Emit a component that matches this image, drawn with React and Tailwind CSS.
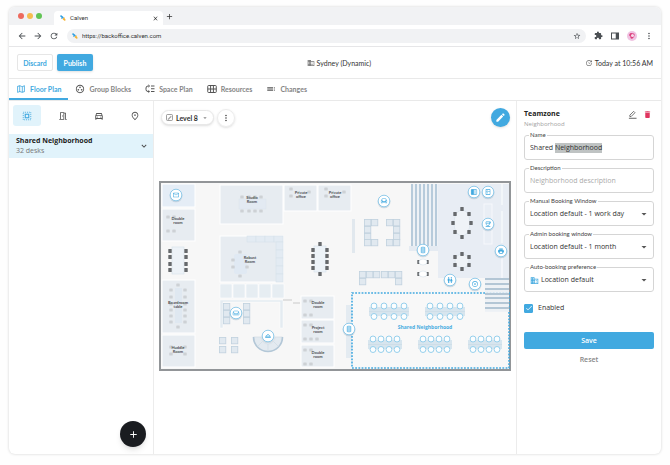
import React, { useEffect, useRef, useState } from "react";
import {
  MdAdd,
  MdAdjust,
  MdArrowBack,
  MdArrowDropDown,
  MdArrowForward,
  MdBusiness,
  MdCheck,
  MdClose,
  MdDelete,
  MdEdit,
  MdExtension,
  MdKeyboardArrowDown,
  MdMoreVert,
  MdOutlineChair,
  MdOutlineCoffee,
  MdOutlineDirectionsCar,
  MdOutlineGroupWork,
  MdOutlineKitchen,
  MdOutlineMailOutline,
  MdOutlineMap,
  MdOutlineMeetingRoom,
  MdOutlinePlace,
  MdOutlineRoomService,
  MdOutlineWeekend,
  MdPrint,
  MdRefresh,
  MdStarOutline,
  MdToc,
  MdUpdate,
  MdWc,
} from "react-icons/md";

const Logo = () => (
  <svg viewBox="0 0 12 12" className="size-[6px] shrink-0" aria-hidden="true">
    <path d="M2.2 2.2 L5.6 5.2" stroke="#2f9fe0" strokeWidth="3.6" strokeLinecap="round" />
    <path d="M7 7.6 L9.4 9.8" stroke="#f5b335" strokeWidth="3.4" strokeLinecap="round" />
    <circle cx="8.8" cy="6.2" r="1.4" fill="#f5b335" />
    <circle cx="3.4" cy="6.6" r="1.1" fill="#2f9fe0" />
  </svg>
);

const ZoneIcon = ({ className }) => (
  <svg viewBox="0 0 20 20" fill="none" stroke="currentColor" className={className}>
    <rect x="2.5" y="2.5" width="15" height="15" strokeWidth="1.8" strokeDasharray="1.9 1.85" />
    <rect x="6.5" y="6.5" width="7" height="7" strokeWidth="2.2" />
  </svg>
);

const SpacePlanIcon = ({ className }) => (
  <svg viewBox="0 0 20 20" fill="none" stroke="currentColor" strokeWidth="2" className={className}>
    <path d="M8.5 4 H6 A4 4 0 0 0 2 8 V11 A4 4 0 0 0 6 15 H8.5" />
    <path d="M6.5 1.5 L9.5 4 L6.5 6.5 M6.5 12.5 L9.5 15 L6.5 17.5" strokeWidth="1.4" />
    <path d="M12 4 H19 M12 9.5 H19 M12 15 H19" />
  </svg>
);

const ResourcesIcon = ({ className }) => (
  <svg viewBox="0 0 20 20" fill="none" stroke="currentColor" strokeWidth="2" className={className}>
    <rect x="1.5" y="3" width="17" height="14" rx="1.5" />
    <path d="M1.5 10 H18.5 M7.2 3 V17 M12.8 3 V17" />
  </svg>
);

const LevelIcon = () => (
  <svg viewBox="0 0 20 20" fill="none" stroke="#666" strokeWidth="1.8" className="size-[7px]">
    <rect x="1.5" y="1.5" width="17" height="17" rx="2.5" />
    <path d="M5 15 H8 V12 H11 V9 H14 V5.5" />
  </svg>
);

const PencilLineIcon = () => (
  <svg viewBox="0 0 20 20" fill="none" stroke="#555" strokeWidth="1.8" className="size-[9px]">
    <path d="M4 14.5 V11.5 L12.5 3 L15.5 6 L7 14.5 Z" />
    <path d="M2 18.4 H19" strokeWidth="2" />
  </svg>
);

// tall cabinet, used for lifts
const LiftIcon = ({ x, y }) => (
  <svg x={x} y={y} width="7" height="7" viewBox="0 0 14 14" fill="#c9e7f7" stroke="#41a9e0" strokeWidth="1.4">
    <rect x="3.5" y="1" width="7" height="12" rx="1.5" />
    <path d="M6 4.5 H8 M6 7 H8 M6 9.5 H8" />
  </svg>
);

const LockerIcon = ({ x, y }) => (
  <svg x={x} y={y} width="7" height="7" viewBox="0 0 14 14" stroke="#41a9e0" strokeWidth="1.3">
    <rect x="1.5" y="2" width="11" height="10" rx="1" fill="#fff" />
    <path d="M2 2.5 H6 V11.5 H2 Z" fill="#41a9e0" />
    <path d="M9 2 V12" />
  </svg>
);

const tabs = [
  { label: "Floor Plan", icon: MdOutlineMap },
  { label: "Group Blocks", icon: MdOutlineGroupWork },
  { label: "Space Plan", icon: SpacePlanIcon },
  { label: "Resources", icon: ResourcesIcon },
  { label: "Changes", icon: MdToc },
];

const layers = [
  { label: "Zones", icon: ZoneIcon },
  { label: "Rooms", icon: MdOutlineMeetingRoom },
  { label: "Parking", icon: MdOutlineDirectionsCar },
  { label: "Places", icon: MdOutlinePlace },
];

const rooms = [
  [3, 3, 33, 23, "#e5edf6"],
  [3, 28, 33, 32],
  [3, 99, 33, 53],
  [3, 154, 33, 32],
  [61, 4, 63, 39],
  [61, 55, 63, 46],
  [125, 4, 33, 26],
  [159, 4, 33, 26],
  [142, 115, 33, 23],
  [142, 139, 33, 23],
  [142, 164, 33, 22],
];

const roomLabels = [
  [19, 39, "Double", "room"],
  [93, 18, "Studio", "Room"],
  [91, 78, "Robust", "Room"],
  [19, 123, "Boardroom", "table"],
  [19, 168, "Huddle", "Room"],
  [142, 13, "Private", "office"],
  [176, 13, "Private", "office"],
  [159, 123, "Double", "room"],
  [159, 148, "Project", "room"],
  [159, 173, "Double", "room"],
];

const paleChairs = [
  [9, 36], [15, 36], [9, 50], [15, 50],
  [83, 16], [90, 16], [96, 16], [102, 16], [83, 30], [90, 30], [96, 30], [102, 30],
  [81, 71], [74, 79], [74, 86], [88, 86], [81, 95],
  [19, 104], [19, 146],
  [12, 109], [12, 116], [12, 123], [12, 129], [12, 135], [12, 141],
  [26, 109], [26, 116], [26, 123], [26, 129], [26, 135], [26, 141],
  [12, 166], [26, 166], [12, 173], [26, 173],
  [132, 8], [132, 15], [150, 11], [167, 8], [167, 15], [185, 11],
  [146, 120], [152, 120], [146, 134], [152, 134],
  [146, 144], [152, 144], [146, 158], [152, 158], [158, 158],
  [146, 169], [152, 169], [146, 183], [152, 183],
];

const darkChairs = [
  [11, 70], [11, 76], [11, 83], [11, 89], [27, 70], [27, 76], [27, 83], [27, 89],
  [154, 69], [154, 75], [154, 81], [154, 87], [168, 69], [168, 75], [168, 81], [168, 87],
  [161, 63], [161, 93],
  [303, 28], [296, 33], [310, 33], [294, 42], [312, 42], [296, 51], [310, 51], [303, 56],
  [303, 73], [296, 76], [310, 76], [296, 84], [310, 84], [303, 88],
  [260, 81], [268, 81], [260, 93], [268, 93],
];

const sofas = [
  // library corner
  [64, 122], [64, 129], [64, 136], [84, 122], [84, 129], [84, 136],
  // single seats
  [60, 156], [72, 156], [60, 165], [72, 165],
  // lounge
  [205, 38], [212, 38], [205, 45], [205, 52], [205, 58], [212, 58],
  [227, 38], [234, 38], [234, 45], [234, 52], [234, 58], [227, 58],
  // booths
  [200, 90], [207, 90], [214, 90], [200, 97], [222, 90], [229, 90], [236, 90], [236, 97],
];

const deskGroups = [
  { x: 215, y: 125, step: 10 },
  { x: 271, y: 125, step: 10 },
  { x: 214, y: 158, step: 8 },
  { x: 264, y: 158, step: 8 },
  { x: 314, y: 158, step: 8 },
];

const markers = [
  [17, 14, MdOutlineMailOutline],
  [225, 20, MdOutlineChair],
  [315, 11, LockerIcon],
  [329, 11, MdOutlineKitchen],
  [329, 43, MdOutlineCoffee],
  [342, 70, MdPrint],
  [264, 69, LiftIcon],
  [291, 99, MdWc],
  [316, 103, MdAdjust],
  [77, 132, MdOutlineWeekend],
  [109, 155, MdOutlineRoomService],
  [190, 148, LiftIcon],
];

const FloorPlan = () => (
  <svg viewBox="0 0 352 190" className="block w-full" role="img" aria-label="Level 8 floor plan">
    <rect x="1" y="1" width="350" height="188" fill="#f7f7f7" stroke="#929598" strokeWidth="2" />

    {/* Rooms */}
    {rooms.map(([x, y, w, h, fill]) => (
      <rect key={`${x}-${y}`} x={x} y={y} width={w} height={h} fill={fill || "#e7ecf1"} stroke="#fff" strokeWidth="1" />
    ))}
    <rect x="80" y="18" width="27" height="10" fill="#e3eaf2" stroke="#dbe3ec" strokeWidth=".5" />
    <rect x="75" y="73" width="13" height="20" rx="2" fill="#e0e9f3" />
    <rect x="16" y="107" width="7" height="35" fill="#dfe8f1" />
    {[88, 97, 106, 115].map((x) => (
      <rect key={x} x={x} y="55" width="9" height="6" fill="#e3ebf3" stroke="#d6e1ea" strokeWidth=".6" />
    ))}
    {[61, 69, 77, 85, 93].map((y) => (
      <rect key={y} x="117" y={y} width="7" height="8" fill="#e3ebf3" stroke="#d6e1ea" strokeWidth=".6" />
    ))}
    {[61, 74, 87, 100, 113].map((x) => (
      <rect key={x} x={x} y="103" width="12" height="14" fill="#e6edf2" stroke="#fff" strokeWidth=".6" />
    ))}
    <path d="M61 119 H124 V147 H121 V121 H64 V147 H61 Z" fill="#e4ebf1" stroke="#fff" strokeWidth=".5" />
    <rect x="124" y="118" width="9" height="2" fill="#e0e0e0" />
    <rect x="134" y="121" width="7" height="2" fill="#e0e0e0" />
    <rect x="193" y="38" width="3" height="34" fill="#e1e8ee" />
    <rect x="187" y="124" width="6" height="53" fill="#e4ebf1" />

    {/* East wing */}
    <path d="M279 3 H350 V97 H279 Z" fill="#e8edf4" />
    <path d="M343 3 V24 M343 30 V62 M343 77 V97" stroke="#f6f8fb" strokeWidth="1.5" />
    <rect x="325" y="23" width="8" height="40" fill="#e9eef5" stroke="#f6f8fb" strokeWidth="1" />
    <rect x="250" y="65" width="29" height="5" fill="#e5ebf2" />
    <rect x="252" y="3" width="27" height="62" fill="#eef2f6" />
    {[252, 256, 260, 264, 268, 272, 276].map((x) => (
      <rect key={x} x={x} y="3" width="2" height="62" fill="#b7cbdb" />
    ))}

    {/* Tables */}
    <rect x="13" y="66" width="12" height="27" fill="#edf2f7" stroke="#d5e1ea" strokeWidth=".6" />
    <rect x="155" y="65" width="12" height="26" fill="#edf3f8" stroke="#d5e1ea" strokeWidth=".6" />
    <ellipse cx="303" cy="42" rx="8" ry="13" fill="#eff3f7" stroke="#d5e1ea" strokeWidth=".6" />
    <circle cx="303" cy="80" r="7" fill="#eff3f7" stroke="#d5e1ea" strokeWidth=".6" />
    {paleChairs.map(([x, y]) => (
      <rect key={`${x}-${y}`} x={x - 1.7} y={y - 1.5} width="3.4" height="3" rx=".6" fill="#cdd1d5" />
    ))}
    {darkChairs.map(([x, y]) => (
      <rect key={`${x}-${y}`} x={x - 1.7} y={y - 1.9} width="3.4" height="3.8" rx=".5" fill="#66696c" />
    ))}
    <ellipse cx="264" cy="81" rx="4" ry="3" fill="#fff" stroke="#d5e1ea" strokeWidth=".6" />
    <ellipse cx="264" cy="93" rx="4" ry="3" fill="#fff" stroke="#d5e1ea" strokeWidth=".6" />
    {sofas.map(([x, y]) => (
      <rect key={`${x}-${y}`} x={x + 0.4} y={y + 0.4} width="6.4" height="6.4" fill="#e1e9f0" stroke="#c0d1de" strokeWidth=".8" />
    ))}
    <path d="M94.5 156 A14.5 14.5 0 0 0 123.5 156 H116 A7 7 0 0 1 102 156 Z" fill="#e3eaf0" stroke="#ccd9e3" strokeWidth=".6" />
    <path d="M94.5 156 A14.5 14.5 0 0 0 123.5 156" fill="none" stroke="#b3c7d7" strokeWidth="1.6" />
    <path d="M103.5 160.5 L98.5 165.5 M109 163 V170 M114.5 160.5 L119.5 165.5" stroke="#ccd9e3" strokeWidth=".6" />

    {/* Selected zone */}
    <rect x="193" y="112" width="157" height="75" fill="#f8f8f8" />
    <path d="M193 112 H350 V187 H193 Z" fill="none" stroke="#41a9e0" strokeWidth="1.6" strokeDasharray="1.8 1.4" />
    {[97, 102, 107, 112, 116, 121, 126].map((y) => (
      <React.Fragment key={y}>
        <rect x="326" y={y} width="24" height="4.8" fill="#edf1f5" />
        <rect x="326" y={y} width="24" height="2" fill="#b3c6d5" />
      </React.Fragment>
    ))}
    {deskGroups.map(({ x, y, step }) => (
      <g key={`${x}-${y}`}>
        <rect x={x - 5} y={y + 1} width={step * 3 + 10} height="9" fill="#d7e5ee" />
        <path d={`M${x - 5} ${y + 5.5} h${step * 3 + 10}`} stroke="#c4d7e3" strokeWidth=".5" />
        {[0, 1, 2, 3].map((i) => (
          <g key={i} fill="#fcfeff" stroke="#8bcbea" strokeWidth=".9">
            <ellipse cx={x + i * step} cy={y} rx="2.9" ry="3" />
            <ellipse cx={x + i * step} cy={y + 10.5} rx="2.9" ry="3" />
          </g>
        ))}
      </g>
    ))}
    <text x="266" y="148" textAnchor="middle" className="fill-[#4aade1] text-[5px] font-bold">
      Shared Neighborhood
    </text>

    {/* Room names */}
    {roomLabels.map(([x, y, top, bottom]) => (
      <text key={`${x}-${y}`} textAnchor="middle" className="fill-[#4c4f52] font-['Lato',sans-serif] text-[4px] font-bold">
        <tspan x={x} y={y}>{top}</tspan>
        <tspan x={x} y={y + 4}>{bottom}</tspan>
      </text>
    ))}

    {/* Markers */}
    {markers.map(([x, y, Icon]) => (
      <g key={`${x}-${y}`}>
        <circle cx={x} cy={y + 0.8} r="6.5" fill="#9db6c8" opacity=".45" />
        <circle cx={x} cy={y} r="5.8" fill="#fff" stroke="#7cc3e8" strokeWidth=".8" />
        <Icon x={x - 3.5} y={y - 3.5} width="7" height="7" size="7" color="#41a9e0" />
      </g>
    ))}
  </svg>
);

const Field = ({ id, label, children }) => (
  <fieldset className="rounded-[3px] border border-[#d5d5d5] px-[5px]">
    <legend className="-ml-px px-px font-['Lato',sans-serif] text-[6px] leading-[8px] text-[#444]">
      <label htmlFor={id} className="block">{label}</label>
    </legend>
    <div className="flex h-5 items-center gap-0.5 pb-0.5">{children}</div>
  </fieldset>
);

const SelectField = ({ id, label, option, icon }) => (
  <Field id={id} label={label}>
    {icon}
    <select id={id} className="min-w-0 flex-1 appearance-none bg-transparent text-[7px] text-[#333] outline-none">
      <option>{option}</option>
    </select>
    <MdArrowDropDown className="pointer-events-none -mr-0.5 size-[12px] text-[#555]" />
  </Field>
);

const App = () => {
  const [activeTab, setActiveTab] = useState("Floor Plan");
  const [layer, setLayer] = useState("Zones");
  const [name, setName] = useState("Shared Neighborhood");
  const [enabled, setEnabled] = useState(true);
  const nameRef = useRef(null);

  useEffect(() => {
    nameRef.current.focus();
    nameRef.current.setSelectionRange(7, 19);
  }, []);

  return (
    <div className="flex min-h-screen bg-[#fefefe] px-[9px] pt-[7px] pb-[11px] font-['Open_Sans',sans-serif] text-[7px] leading-[10px] text-[#333]">
      <div className="flex min-w-0 flex-1 flex-col overflow-hidden rounded-md bg-white shadow-[0_0_3px_rgba(0,0,0,0.18)]">
        {/* Browser tab strip */}
        <div className="flex h-[18px] items-end bg-[#f1f2f4] pl-2">
          <div className="flex gap-[3px] self-center pl-px">
            <span className="size-[6px] rounded-full bg-[#ed6a5e]" />
            <span className="size-[6px] rounded-full bg-[#f5bd4f]" />
            <span className="size-[6px] rounded-full bg-[#61c454]" />
          </div>
          <div className="ml-3 flex h-[14px] w-[109px] items-center gap-1 rounded-t bg-white pr-1 pl-[6px] font-['Roboto',sans-serif] text-[6px]">
            <Logo />
            <span className="flex-1">Calven</span>
            <button type="button" aria-label="Close tab"><MdClose className="size-[7px]" /></button>
          </div>
          <button type="button" aria-label="New tab" className="ml-0.5 self-center"><MdAdd className="size-[9px]" /></button>
        </div>

        {/* Address bar */}
        <div className="flex h-[22px] items-center border-b border-[#e6e6e8] pr-2 pl-2 text-[#4c5054]">
          <div className="flex gap-[6px]">
            <button type="button" aria-label="Back"><MdArrowBack className="size-[10px]" /></button>
            <button type="button" aria-label="Forward"><MdArrowForward className="size-[10px]" /></button>
            <button type="button" aria-label="Reload"><MdRefresh className="size-[10px]" /></button>
          </div>
          <div className="ml-2 flex h-[14px] flex-1 items-center gap-1 rounded-full bg-[#f1f2f4] px-[5px]">
            <Logo />
            <input aria-label="Address" defaultValue="https://backoffice.calven.com" className="min-w-0 flex-1 bg-transparent font-['Roboto',sans-serif] text-[6px] text-[#333] outline-none" />
            <button type="button" aria-label="Bookmark"><MdStarOutline className="size-[8px]" /></button>
          </div>
          <div className="ml-2 flex items-center gap-2">
            <button type="button" aria-label="Extensions"><MdExtension className="size-[9px]" /></button>
            <button type="button" aria-label="Side panel">
              <svg viewBox="0 0 16 16" className="size-[8px]">
                <rect x="1" y="2" width="14" height="12" fill="none" stroke="currentColor" strokeWidth="2" />
                <rect x="9.5" y="2" width="5.5" height="12" fill="currentColor" />
              </svg>
            </button>
            <button type="button" aria-label="Profile">
              <svg viewBox="0 0 20 20" className="size-[10px]">
                <circle cx="10" cy="10" r="10" fill="#efc3e2" />
                <path d="M5 6 C8 2 11 6 14 5 C17 8 14 13 11 15 C8 17 6 13 7 11 C4 10 4 8 5 6 Z" fill="#dd3f7d" />
                <circle cx="11" cy="9" r="3" fill="#f7dcec" />
              </svg>
            </button>
            <button type="button" aria-label="Menu" className="-mx-px"><MdMoreVert className="size-[10px]" /></button>
          </div>
        </div>

        {/* App header */}
        <header className="flex h-8 shrink-0 items-center justify-between border-b border-[#e9e9e9] px-2 font-['Lato',sans-serif]">
          <div className="flex gap-1">
            <button type="button" className="h-[17px] w-9 rounded-[2px] border border-[#e6e6e6] font-bold text-[#41a9e0]">Discard</button>
            <button type="button" className="h-[17px] w-9 rounded-[2px] bg-[#41a9e0] font-bold text-white shadow-sm">Publish</button>
          </div>
          <div className="flex items-center gap-0.5">
            <MdBusiness className="size-[8px] text-[#777]" />
            Sydney (Dynamic)
          </div>
          <div className="flex items-center gap-0.5">
            <MdUpdate className="size-[8px] text-[#777]" />
            Today at 10:56 AM
          </div>
        </header>

        <nav className="flex h-[22px] shrink-0 border-b border-[#e9e9e9] font-['Lato',sans-serif]">
          {tabs.map(({ label, icon: Icon }) => (
            <button
              key={label}
              type="button"
              onClick={() => setActiveTab(label)}
              className={`flex items-center gap-1 border-b-2 px-[7px] font-bold ${
                activeTab === label ? "border-[#41a9e0] text-[#41a9e0]" : "border-transparent text-[#858585]"
              }`}
            >
              <Icon className={`size-[10px] ${activeTab === label ? "" : "text-[#555]"}`} />
              {label}
            </button>
          ))}
        </nav>

        <main className="flex flex-1">
          {/* Zone list */}
          <aside className="flex w-[145px] shrink-0 flex-col border-r border-[#ececec]">
            <div className="grid grid-cols-4 py-1">
              {layers.map(({ label, icon: Icon }) => (
                <button
                  key={label}
                  type="button"
                  aria-label={label}
                  onClick={() => setLayer(label)}
                  className={`mx-1 flex h-[21px] items-center justify-center rounded-[3px] ${
                    layer === label ? "bg-[#e1f3fb] text-[#41a9e0]" : "text-[#555]"
                  }`}
                >
                  <Icon className="size-[10px]" />
                </button>
              ))}
            </div>
            <button type="button" className="mt-1 flex h-6 items-center justify-between bg-[#e1f3fb] pr-1 pl-[7px] text-left">
              <span>
                <span className="block font-bold text-[#222]">Shared Neighborhood</span>
                <span className="block text-[#777]">32 desks</span>
              </span>
              <MdKeyboardArrowDown className="size-[10px] text-[#444]" />
            </button>
            <button type="button" aria-label="Add zone" className="mt-auto mr-[7px] mb-[7px] flex size-[26px] items-center justify-center self-end rounded-full bg-[#1a1c20] text-white shadow-md">
              <MdAdd className="size-[11px]" />
            </button>
          </aside>

          {/* Canvas */}
          <section className="min-w-0 flex-1 pr-[5px] pl-[5px]">
            <div className="flex items-center gap-[3px] pt-[7px] pl-0.5">
              <button type="button" className="flex h-[15px] items-center gap-[3px] rounded-full border border-[#e8e8e8] bg-white px-1 font-['Lato',sans-serif] font-bold shadow-sm">
                <LevelIcon />
                Level 8
                <MdArrowDropDown className="size-[8px] text-[#888]" />
              </button>
              <button type="button" aria-label="More" className="flex size-[18px] items-center justify-center rounded-full border border-[#ececec] shadow-sm">
                <MdMoreVert className="size-[10px] text-[#444]" />
              </button>
              <button type="button" aria-label="Edit plan" className="mr-px ml-auto flex size-[19px] items-center justify-center rounded-full bg-[#41a9e0] text-white shadow-sm">
                <MdEdit className="size-[11px]" />
              </button>
            </div>
            <div className="pt-[54px]">
              <FloorPlan />
            </div>
          </section>

          {/* Zone details */}
          <form onSubmit={(e) => e.preventDefault()} className="w-[145px] shrink-0 border-l border-[#ececec] px-[7px] pt-2">
            <div className="flex items-start justify-between">
              <div>
                <h2 className="font-bold text-[#222]">Teamzone</h2>
                <p className="text-[6px] text-[#a3a3a3]">Neighborhood</p>
              </div>
              <div className="flex gap-[6px] pt-px pr-0.5">
                <button type="button" aria-label="Rename"><PencilLineIcon /></button>
                <button type="button" aria-label="Delete"><MdDelete className="size-[9px] text-[#e0355f]" /></button>
              </div>
            </div>
            <div className="mt-0.5 flex flex-col gap-1">
              <Field id="name" label="Name">
                <input
                  id="name"
                  ref={nameRef}
                  value={name}
                  onChange={(e) => setName(e.target.value)}
                  className="w-full bg-transparent text-[7px] caret-transparent outline-none selection:bg-[#bfc3c3] selection:text-[#333]"
                />
              </Field>
              <Field id="description" label="Description">
                <input id="description" placeholder="Neighborhood description" className="w-full bg-transparent text-[7px] outline-none placeholder:text-[#aaa]" />
              </Field>
              <SelectField id="manual" label="Manual Booking Window" option="Location default - 1 work day" />
              <SelectField id="admin" label="Admin booking window" option="Location default - 1 month" />
              <SelectField
                id="auto"
                label="Auto-booking preference"
                option="Location default"
                icon={<MdBusiness className="size-[9px] text-[#41a9e0]" />}
              />
            </div>
            <label className="mt-[11px] flex items-center gap-[5px]">
              <span className="grid size-[9px] place-items-center">
                <input
                  type="checkbox"
                  checked={enabled}
                  onChange={(e) => setEnabled(e.target.checked)}
                  className="col-start-1 row-start-1 size-[9px] appearance-none rounded-[1px] border border-[#41a9e0] checked:bg-[#41a9e0]"
                />
                {enabled && <MdCheck className="pointer-events-none col-start-1 row-start-1 size-[8px] text-white" />}
              </span>
              Enabled
            </label>
            <button type="submit" className="mt-[19px] block h-[17px] w-full rounded-[2px] bg-[#41a9e0] font-semibold text-white">Save</button>
            <button type="reset" className="mx-auto mt-[6px] block font-semibold text-[#888]">Reset</button>
          </form>
        </main>
      </div>
    </div>
  );
};

export default App;
